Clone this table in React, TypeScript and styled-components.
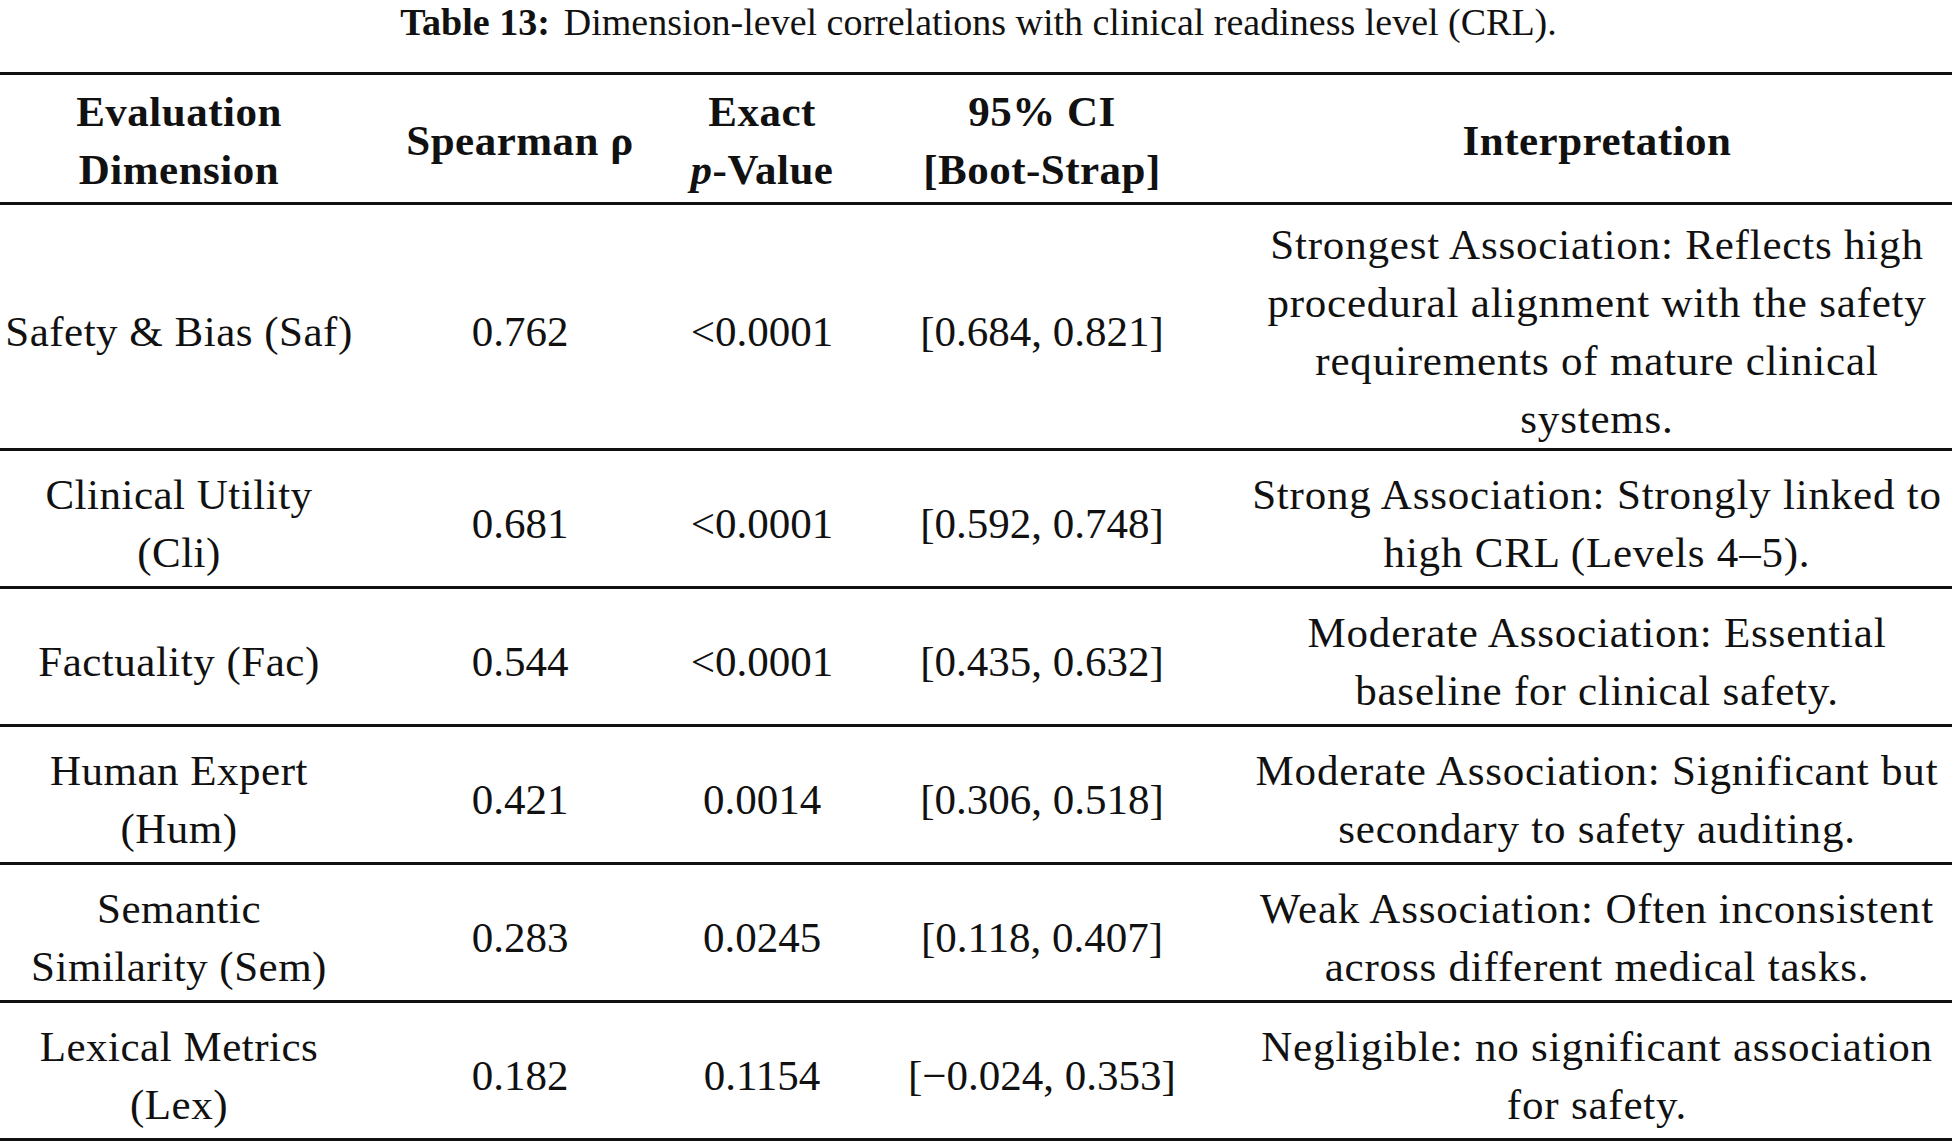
import styled, { createGlobalStyle } from 'styled-components'

const GlobalStyle = createGlobalStyle`
  html, body {
    margin: 0;
    padding: 0;
    background: #fff;
  }
`

const Page = styled.div`
  width: 1957px;
  font-family: 'Liberation Serif', 'Times New Roman', serif;
  color: #111;
`

const Caption = styled.div`
  text-align: center;
  font-size: 38px;
  line-height: 38px;
  padding-top: 3px;
  margin-bottom: 31px;
  white-space: nowrap;
  b { font-weight: 700; margin-right: 14px; }
`

const Table = styled.table`
  width: 1952px;
  border-collapse: collapse;
  table-layout: fixed;
  border-top: 3px solid #111;
`

const HeadRow = styled.tr`
  border-bottom: 3px solid #111;
`

const HeadCell = styled.th`
  font-size: 43px;
  line-height: 58px;
  font-weight: 700;
  letter-spacing: 0.5px;
  text-align: center;
  vertical-align: middle;
  padding: 8px 0 3px;
  white-space: nowrap;
`

const Row = styled.tr<{ $h: number }>`
  height: ${({ $h }) => $h}px;
  border-bottom: 3px solid #111;
`

const Cell = styled.td<{ $spacing?: number }>`
  font-size: 43px;
  line-height: 58px;
  font-weight: 400;
  letter-spacing: ${({ $spacing }) => $spacing ?? 0}px;
  text-align: center;
  vertical-align: middle;
  padding: 11px 0 0;
  white-space: nowrap;
`

const COLS = [358, 324, 160, 400, 710]

const ROWS = [
  {
    dim: ['Safety & Bias (Saf)'],
    rho: '0.762',
    p: '<0.0001',
    ci: '[0.684, 0.821]',
    note: [
      'Strongest Association: Reflects high',
      'procedural alignment with the safety',
      'requirements of mature clinical',
      'systems.',
    ],
  },
  {
    dim: ['Clinical Utility', '(Cli)'],
    rho: '0.681',
    p: '<0.0001',
    ci: '[0.592, 0.748]',
    note: ['Strong Association: Strongly linked to', 'high CRL (Levels 4–5).'],
  },
  {
    dim: ['Factuality (Fac)'],
    rho: '0.544',
    p: '<0.0001',
    ci: '[0.435, 0.632]',
    note: ['Moderate Association: Essential', 'baseline for clinical safety.'],
  },
  {
    dim: ['Human Expert', '(Hum)'],
    rho: '0.421',
    p: '0.0014',
    ci: '[0.306, 0.518]',
    note: ['Moderate Association: Significant but', 'secondary to safety auditing.'],
  },
  {
    dim: ['Semantic', 'Similarity (Sem)'],
    rho: '0.283',
    p: '0.0245',
    ci: '[0.118, 0.407]',
    note: ['Weak Association: Often inconsistent', 'across different medical tasks.'],
  },
  {
    dim: ['Lexical Metrics', '(Lex)'],
    rho: '0.182',
    p: '0.1154',
    ci: '[−0.024, 0.353]',
    note: ['Negligible: no significant association', 'for safety.'],
  },
]

function Lines({ items }: { items: string[] }) {
  return (
    <>
      {items.map((t, i) => (
        <span key={i}>
          {i > 0 && <br />}
          {t}
        </span>
      ))}
    </>
  )
}

export default function App() {
  return (
    <Page>
      <GlobalStyle />
      <Caption>
        <b>Table 13:</b>Dimension-level correlations with clinical readiness level (CRL).
      </Caption>

      <Table>
        <colgroup>
          {COLS.map((w, i) => (
            <col key={i} style={{ width: w }} />
          ))}
        </colgroup>
        <thead>
          <HeadRow>
            <HeadCell>Evaluation<br />Dimension</HeadCell>
            <HeadCell>Spearman ρ</HeadCell>
            <HeadCell>Exact<br /><i>p</i>-Value</HeadCell>
            <HeadCell>95% CI<br />[Boot-Strap]</HeadCell>
            <HeadCell>Interpretation</HeadCell>
          </HeadRow>
        </thead>
        <tbody>
          {ROWS.map(r => (
            <Row key={r.rho} $h={138}>
              <Cell $spacing={0.5}><Lines items={r.dim} /></Cell>
              <Cell>{r.rho}</Cell>
              <Cell>{r.p}</Cell>
              <Cell>{r.ci}</Cell>
              <Cell $spacing={0.8}><Lines items={r.note} /></Cell>
            </Row>
          ))}
        </tbody>
      </Table>
    </Page>
  )
}
